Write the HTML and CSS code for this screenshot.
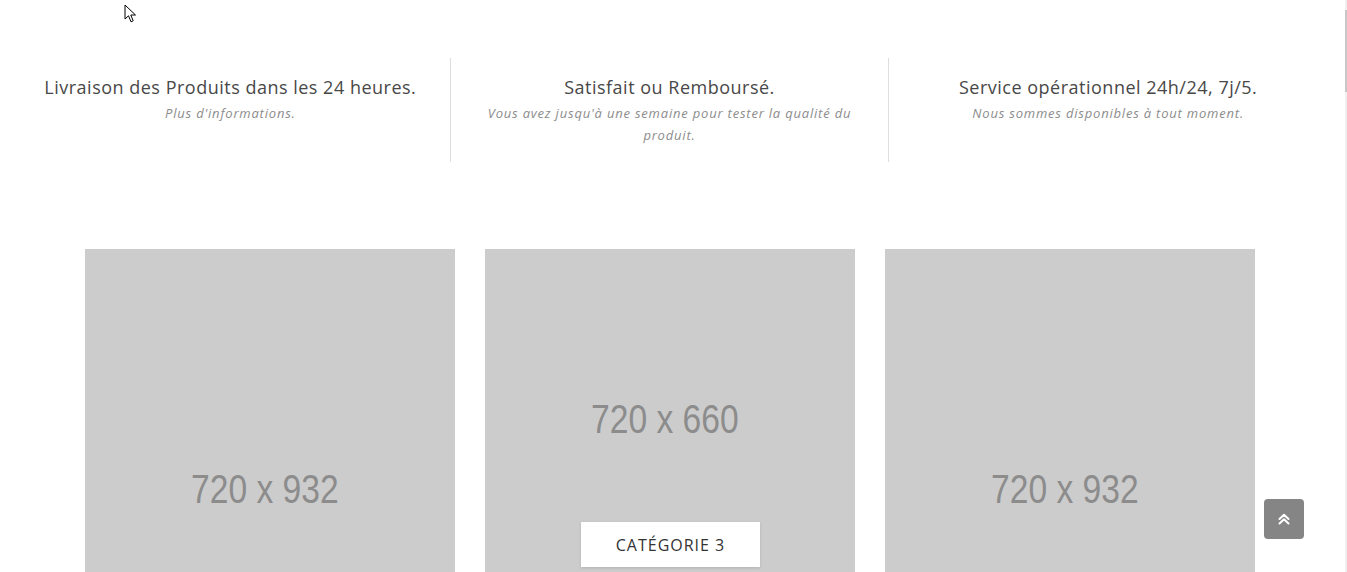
FILE: index.html
```html
<!DOCTYPE html>
<html lang="fr">
<head>
<meta charset="utf-8">
<title>Accueil</title>
<link rel="stylesheet" href="styles.css">
</head>
<body>
<section class="features">
  <div class="feature">
    <h3 class="feature-title">Livraison des Produits dans les 24 heures.</h3>
    <p class="feature-text">Plus d'informations.</p>
  </div>
  <div class="feature">
    <h3 class="feature-title">Satisfait ou Remboursé.</h3>
    <p class="feature-text">Vous avez jusqu'à une semaine pour tester la qualité du produit.</p>
  </div>
  <div class="feature">
    <h3 class="feature-title">Service opérationnel 24h/24, 7j/5.</h3>
    <p class="feature-text">Nous sommes disponibles à tout moment.</p>
  </div>
</section>

<section class="cards">
  <div class="card card-tall"><span class="ph">720 x 932</span></div>
  <div class="card card-short"><span class="ph">720 x 660</span><a class="cat-label" href="#">Catégorie 3</a></div>
  <div class="card card-tall"><span class="ph">720 x 932</span></div>
</section>

<a class="to-top" href="#" aria-label="Haut de page">
  <svg width="16" height="16" viewBox="0 0 16 16" fill="none" stroke="#fff" stroke-width="2" stroke-linecap="round" stroke-linejoin="round"><path d="M3.5 8 L8 3.8 L12.5 8"/><path d="M3.5 12.5 L8 8.3 L12.5 12.5"/></svg>
</a>

<div class="scrollbar"><div class="scrollbar-thumb"></div></div>

<svg class="cursor" width="13" height="20" viewBox="0 0 13 20"><path d="M1 1 L1 15 L4.5 11.8 L7 17.8 L9.2 16.8 L6.8 11 L11.5 11 Z" fill="#fff" stroke="#000" stroke-width="1" stroke-linejoin="round"/></svg>
</body>
</html>
```

FILE: styles.css
```css
html {
  overflow: hidden;
}
body {
  margin: 0;
  background: #fff;
  font-family: "Open Sans", "DejaVu Sans", sans-serif;
  color: #444;
}
.features {
  display: grid;
  grid-template-columns: repeat(3, 1fr);
  width: 1316px;
  margin: 58px 0 0 11px;
}
.feature {
  height: 104px;
  text-align: center;
  padding-top: 16px;
  box-sizing: border-box;
}
.feature + .feature {
  border-left: 1px solid #dedede;
}
.feature-title {
  margin: 0;
  font-size: 18px;
  font-weight: 400;
  line-height: 26px;
  letter-spacing: 0.5px;
  color: #484848;
}
.feature-text {
  margin: 2px auto 0;
  max-width: 374px;
  font-size: 13px;
  font-style: italic;
  line-height: 22px;
  letter-spacing: 0.8px;
  color: #8c8c8c;
}
.cards {
  display: grid;
  grid-template-columns: repeat(3, 370px);
  column-gap: 30px;
  align-items: start;
  margin: 87px 0 0 85px;
}
.card {
  position: relative;
  background: #cccccc;
  display: flex;
  align-items: center;
  justify-content: center;
}
.card-tall { height: 479px; }
.card-short { height: 339px; }
.ph {
  font-family: "Liberation Sans", Arial, sans-serif;
  font-size: 40px;
  color: #8c8c8c;
  transform: translate(-5px, 1px) scaleX(0.84);
  white-space: nowrap;
}
.cat-label {
  position: absolute;
  left: 96px;
  bottom: 21px;
  width: 179px;
  height: 45px;
  display: flex;
  align-items: center;
  justify-content: center;
  background: #fff;
  box-shadow: 0 1px 3px rgba(0,0,0,0.12);
  font-size: 16px;
  letter-spacing: 1px;
  text-transform: uppercase;
  color: #333;
  text-decoration: none;
}
.to-top {
  position: fixed;
  left: 1264px;
  top: 499px;
  width: 40px;
  height: 40px;
  border-radius: 4px;
  background: #858585;
  display: flex;
  align-items: center;
  justify-content: center;
}
.scrollbar {
  position: fixed;
  top: 0;
  right: 0;
  width: 2px;
  height: 100%;
  background: #f0f0f0;
}
.scrollbar-thumb {
  margin-top: 10px;
  height: 82px;
  background: #c8c8c8;
}
.cursor {
  position: fixed;
  left: 124px;
  top: 4px;
}
```
